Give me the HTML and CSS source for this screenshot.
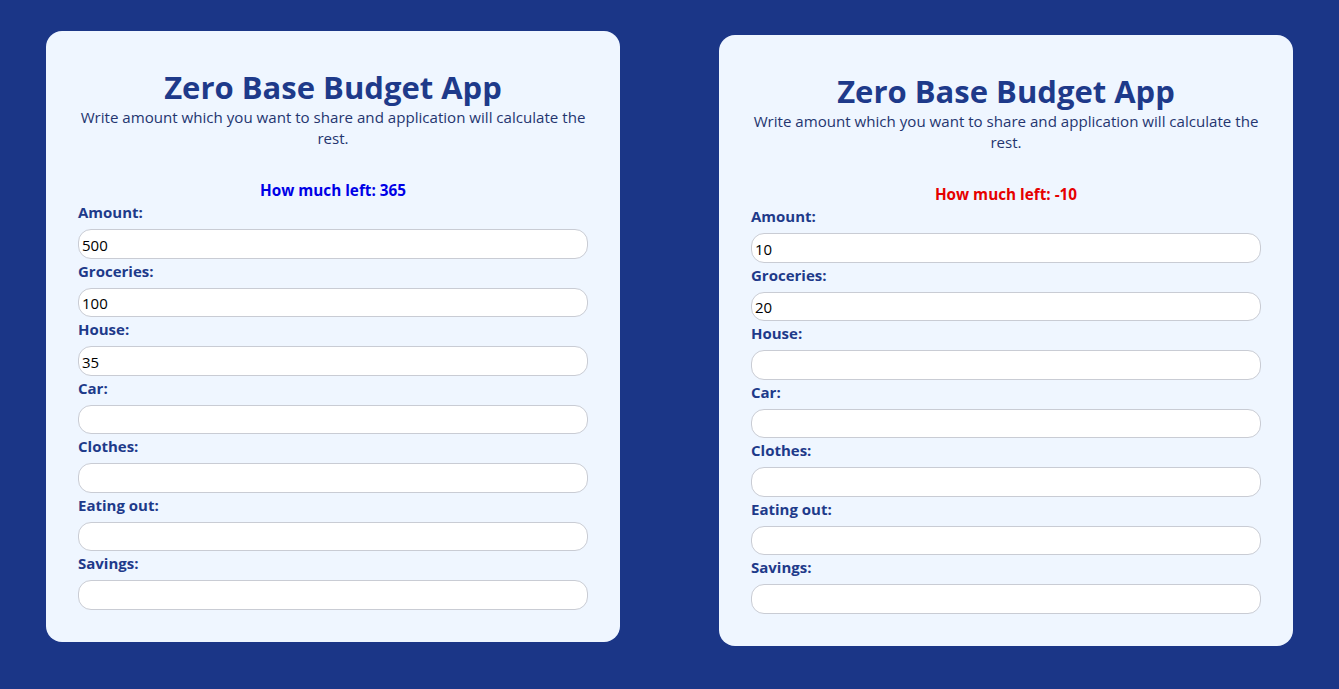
FILE: index.html
```html
<!DOCTYPE html>
<html lang="en">
<head>
<meta charset="utf-8">
<title>Zero Base Budget App</title>
<link rel="stylesheet" href="styles.css">
</head>
<body>
<main class="page">
  <section class="card">
    <h1 class="title">Zero Base Budget App</h1>
    <p class="subtitle">Write amount which you want to share and application will calculate the rest.</p>
    <p class="left left-ok">How much left: 365</p>
    <div class="field"><label class="label">Amount:</label><input class="input" type="text" value="500"></div>
    <div class="field"><label class="label">Groceries:</label><input class="input" type="text" value="100"></div>
    <div class="field"><label class="label">House:</label><input class="input" type="text" value="35"></div>
    <div class="field"><label class="label">Car:</label><input class="input" type="text" value=""></div>
    <div class="field"><label class="label">Clothes:</label><input class="input" type="text" value=""></div>
    <div class="field"><label class="label">Eating out:</label><input class="input" type="text" value=""></div>
    <div class="field"><label class="label">Savings:</label><input class="input" type="text" value=""></div>
  </section>
  <section class="card card-shift">
    <h1 class="title">Zero Base Budget App</h1>
    <p class="subtitle">Write amount which you want to share and application will calculate the rest.</p>
    <p class="left left-bad">How much left: -10</p>
    <div class="field"><label class="label">Amount:</label><input class="input" type="text" value="10"></div>
    <div class="field"><label class="label">Groceries:</label><input class="input" type="text" value="20"></div>
    <div class="field"><label class="label">House:</label><input class="input" type="text" value=""></div>
    <div class="field"><label class="label">Car:</label><input class="input" type="text" value=""></div>
    <div class="field"><label class="label">Clothes:</label><input class="input" type="text" value=""></div>
    <div class="field"><label class="label">Eating out:</label><input class="input" type="text" value=""></div>
    <div class="field"><label class="label">Savings:</label><input class="input" type="text" value=""></div>
  </section>
</main>
</body>
</html>
```
FILE: styles.css
```css
* { box-sizing: border-box; }
html, body {
  margin: 0;
  padding: 0;
  background: #1b3687;
  font-family: "Open Sans", "Noto Sans", sans-serif;
}
.page {
  display: flex;
  align-items: flex-start;
  gap: 99px;
  padding: 31px 46px 0;
  height: 689px;
}
.card {
  width: 574px;
  flex: none;
  background: #eff6ff;
  border-radius: 16px;
  padding: 37px 32px 31px;
}
.card-shift { margin-top: 4px; }
.title {
  margin: 0;
  text-align: center;
  font-size: 31px;
  line-height: 38px;
  font-weight: 700;
  color: #1e3a8a;
}
.subtitle {
  margin: 1px 0 0;
  text-align: center;
  font-size: 15.1px;
  line-height: 21px;
  color: #24356f;
}
.left {
  margin: 31px 0 0;
  text-align: center;
  font-size: 15.3px;
  line-height: 21px;
  font-weight: 700;
}
.left-ok { color: #0000e6; }
.left-bad { color: #e60000; }
.field {
  display: flex;
  flex-direction: column;
  padding-bottom: 1px;
}
.label {
  font-size: 15px;
  line-height: 20px;
  font-weight: 700;
  color: #1e3a8a;
  padding-top: 1px;
  margin-bottom: 7px;
}
.input {
  height: 29.5px;
  width: 100%;
  border: 1px solid #c9ccd4;
  border-radius: 13px;
  background: #fff;
  padding: 2px 3px 0;
  font-family: inherit;
  font-size: 15px;
  color: #000;
  outline: none;
}
```
